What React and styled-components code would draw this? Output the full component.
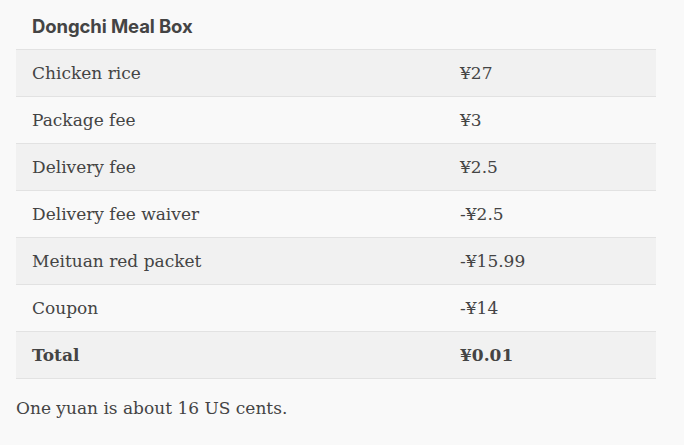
import React from 'react';
import styled, { createGlobalStyle } from 'styled-components';

const GlobalStyle = createGlobalStyle`
  html, body {
    margin: 0;
    background: #f9f9f9;
  }
`;

const Page = styled.div`
  padding: 0 28px 0 16px;
  color: #444;
`;

const Table = styled.table`
  width: 640px;
  border-collapse: collapse;
  font-family: 'DejaVu Serif', serif;
  font-size: 17px;
`;

const Caption = styled.th`
  text-align: left;
  height: 49px;
  padding: 4px 16px 0;
  box-sizing: border-box;
  font-family: Inter, 'Liberation Sans', sans-serif;
  font-weight: 700;
  font-size: 18.5px;
  letter-spacing: -0.1px;
  color: #444;
  border-bottom: 1px solid #e2e2e2;
`;

const Row = styled.tr`
  background: ${(p) => (p.$shaded ? '#f1f1f1' : 'transparent')};
  border-bottom: 1px solid #e2e2e2;
  font-weight: ${(p) => (p.$bold ? 700 : 400)};
`;

const Cell = styled.td`
  height: 46px;
  padding: 0 16px;
  width: ${(p) => p.$width || 'auto'};
`;

const Note = styled.p`
  margin: 19px 0 0;
  font-family: 'DejaVu Serif', serif;
  font-size: 17px;
`;

const items = [
  ['Chicken rice', '¥27'],
  ['Package fee', '¥3'],
  ['Delivery fee', '¥2.5'],
  ['Delivery fee waiver', '-¥2.5'],
  ['Meituan red packet', '-¥15.99'],
  ['Coupon', '-¥14'],
];

export default function App() {
  return (
    <Page>
      <GlobalStyle />
      <Table>
        <thead>
          <tr>
            <Caption colSpan={2}>Dongchi Meal Box</Caption>
          </tr>
        </thead>
        <tbody>
          {items.map(([name, price], i) => (
            <Row key={name} $shaded={i % 2 === 0}>
              <Cell $width="396px">{name}</Cell>
              <Cell>{price}</Cell>
            </Row>
          ))}
          <Row $shaded $bold>
            <Cell>Total</Cell>
            <Cell>¥0.01</Cell>
          </Row>
        </tbody>
      </Table>
      <Note>One yuan is about 16 US cents.</Note>
    </Page>
  );
}
